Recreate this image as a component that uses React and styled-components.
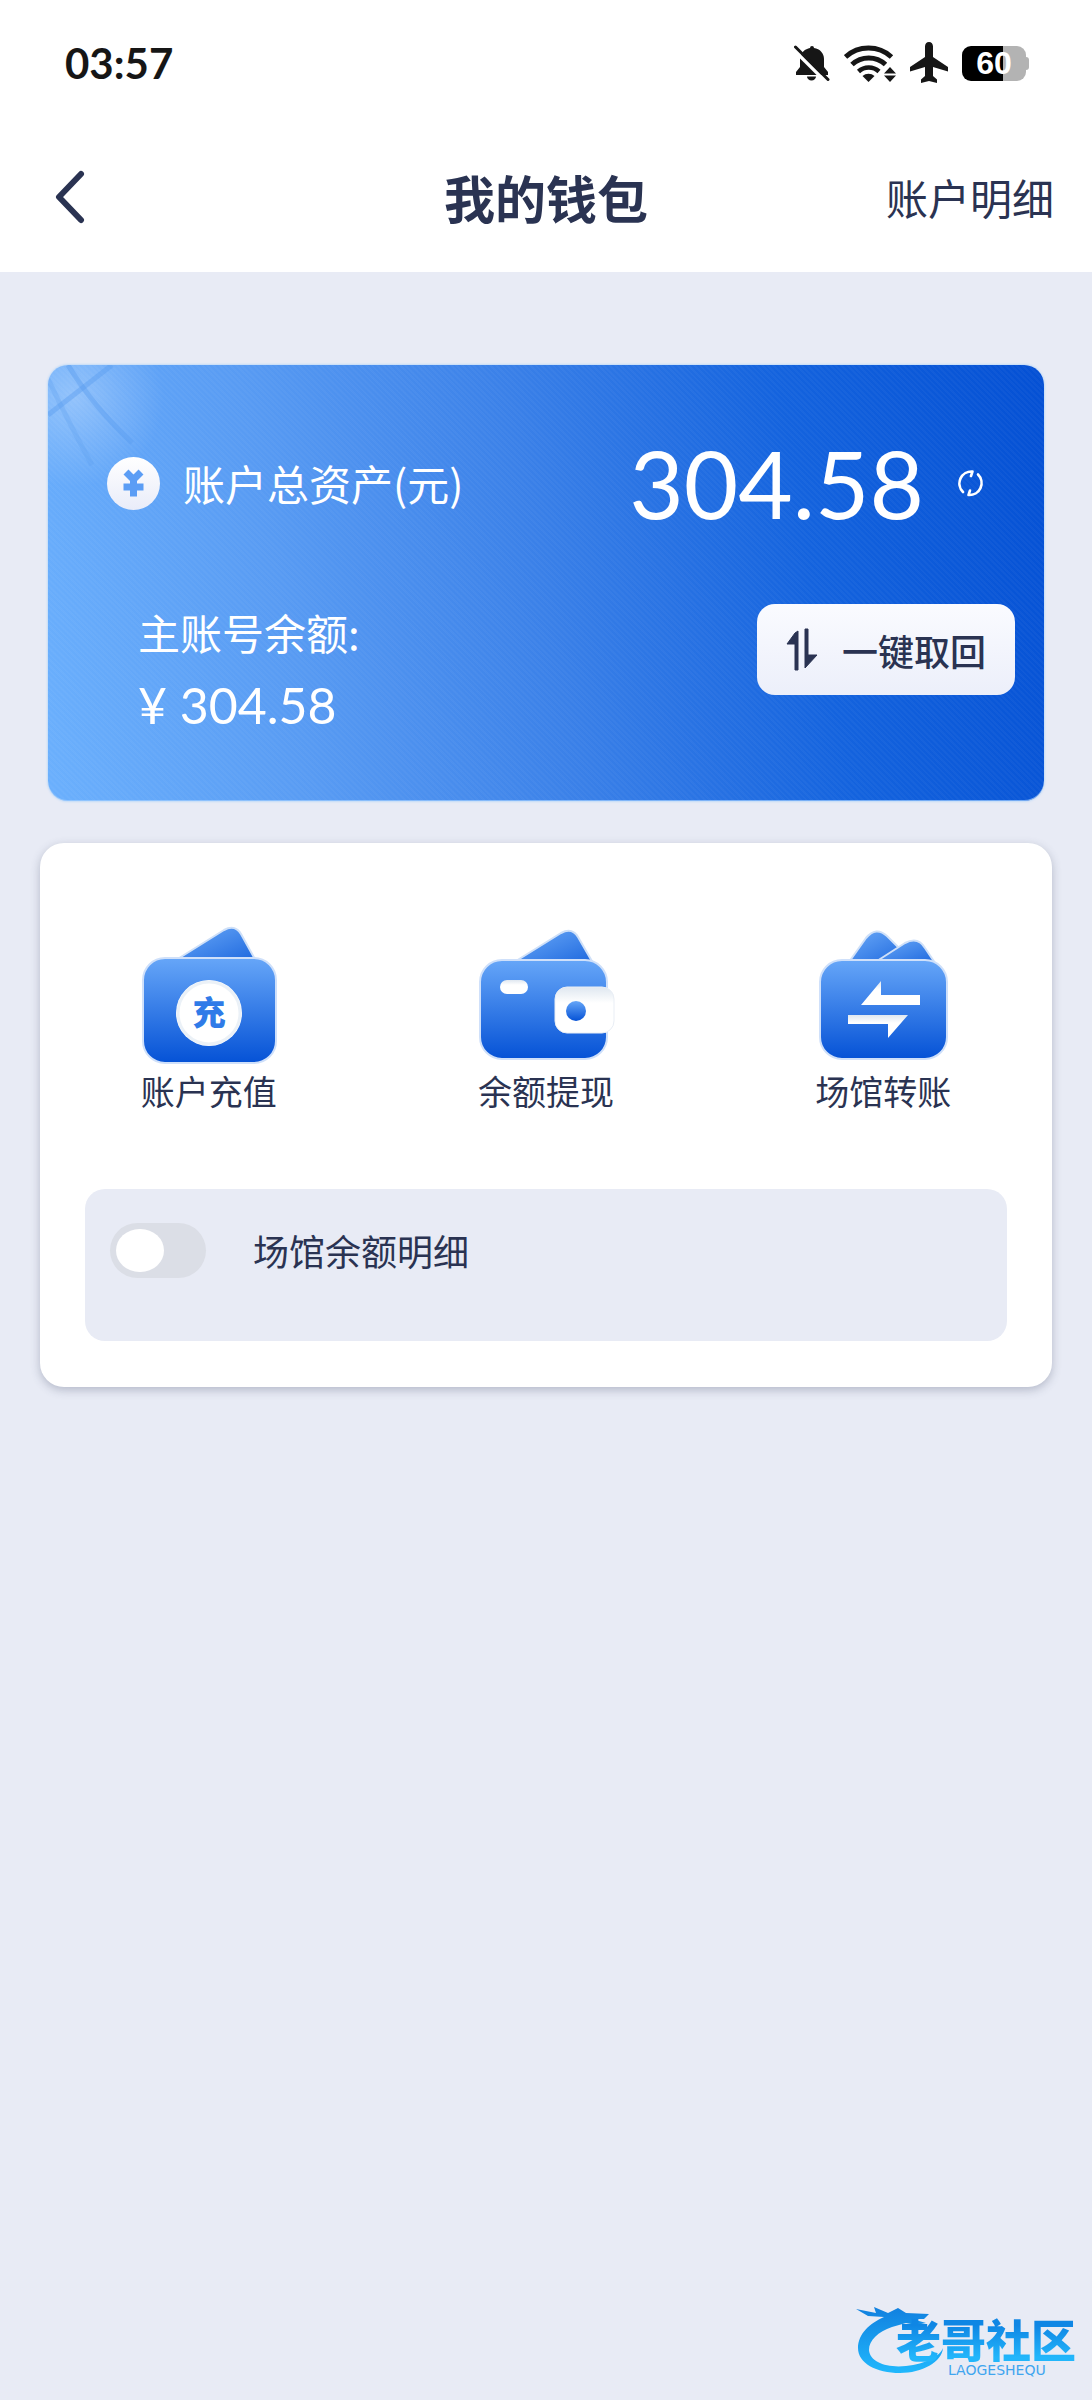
import React, { useState } from "react";
import styled, { createGlobalStyle } from "styled-components";

const GlobalStyle = createGlobalStyle`
  *, *::before, *::after { box-sizing: border-box; }
  body {
    margin: 0;
    background: #e8ebf5;
    color: #2a3352;
    font-family: "Noto Sans CJK SC", sans-serif;
  }
  button, input { font: inherit; color: inherit; }
`;

const Page = styled.div`
  min-height: 100vh;
  display: flex;
  flex-direction: column;
`;

const TopArea = styled.div`
  background: #fff;
`;

const StatusBar = styled.div`
  height: 126px;
  padding: 0 63px 0 65px;
  display: flex;
  align-items: center;
  justify-content: space-between;
`;

const Clock = styled.time`
  font-family: "Lato", sans-serif;
  font-size: 42px;
  font-weight: 700;
  line-height: 50px;
  color: #161616;
`;

const StatusIcons = styled.div`
  display: flex;
  align-items: center;
  gap: 14px;
  color: #161616;
  svg { display: block; }
`;

const Battery = styled.div`
  display: flex;
  align-items: center;
`;

const BatteryBody = styled.div`
  width: 64px;
  height: 35px;
  border-radius: 9px;
  display: flex;
  align-items: center;
  justify-content: center;
  background: linear-gradient(90deg, #000 64%, #b3b3b3 64%);
  color: #fff;
  font-family: "Liberation Sans", sans-serif;
  font-size: 32px;
  font-weight: 700;
  line-height: 35px;
`;

const BatteryTip = styled.div`
  width: 3px;
  height: 13px;
  border-radius: 0 3px 3px 0;
  background: #b3b3b3;
`;

const Header = styled.header`
  height: 146px;
  padding: 0 38px 4px;
  display: grid;
  grid-template-columns: 1fr auto 1fr;
  align-items: center;
`;

const BackButton = styled.button`
  justify-self: start;
  border: 0;
  background: none;
  padding: 6px 16px;
  cursor: pointer;
  svg { display: block; }
`;

const Title = styled.h1`
  margin: 0;
  font-size: 51px;
  font-weight: 700;
  line-height: 60px;
`;

const DetailLink = styled.a`
  justify-self: end;
  font-size: 42px;
  line-height: 60px;
  color: inherit;
  text-decoration: none;
`;

const Main = styled.main`
  flex: 1;
  display: flex;
  flex-direction: column;
  padding: 93px 40px 0;
`;

const BalanceCard = styled.section`
  position: relative;
  overflow: hidden;
  margin: 0 8px;
  padding: 66px 29px 66px 59px;
  border-radius: 20px;
  color: #fff;
  background:
    repeating-linear-gradient(45deg, rgba(255, 255, 255, 0.03) 0 2px, transparent 2px 4px),
    linear-gradient(80deg, #6bb0fd 0%, #589bf3 25%, #3a80e8 50%, #1463de 75%, #0450d4 100%);
  box-shadow: inset 0 -1px 0 rgba(160, 205, 255, 0.7), 0 0 2px 1px #c3dcf7;
`;

const Glow = styled.svg`
  position: absolute;
  top: 0;
  left: 0;
`;

const TotalRow = styled.div`
  position: relative;
  display: flex;
  align-items: center;
  height: 104px;
  padding-right: 31px;
`;

const TotalLabel = styled.h2`
  flex: 1;
  margin: 0 0 0 23px;
  font-size: 42px;
  font-weight: 400;
  line-height: 60px;
`;

const TotalAmount = styled.strong`
  font-family: "Lato", sans-serif;
  font-size: 94px;
  font-weight: 400;
  line-height: 104px;
`;

const RefreshButton = styled.button`
  margin-left: 33px;
  padding: 0;
  border: 0;
  background: none;
  cursor: pointer;
  svg { display: block; }
`;

const MainAccountRow = styled.div`
  display: flex;
  justify-content: space-between;
  align-items: flex-start;
  padding: 69px 0 0 31px;
`;

const MainAccount = styled.div`
  font-size: 42px;
  line-height: 56px;
`;

const AccountAmount = styled.div`
  margin-top: 15px;
  font-family: "Lato", sans-serif;
  font-size: 50px;
  line-height: 60px;
`;

const CollectButton = styled.button`
  height: 91px;
  padding: 0 29px;
  display: flex;
  align-items: center;
  gap: 24px;
  border: 0;
  border-radius: 18px;
  background: linear-gradient(180deg, #fafbff, #eceffa);
  color: #2a3352;
  font-size: 36px;
  font-weight: 500;
  line-height: 48px;
  cursor: pointer;
`;

const ActionsCard = styled.section`
  margin-top: 42px;
  padding: 78px 0 46px;
  border-radius: 24px;
  background: #fff;
  box-shadow: 0 3px 10px rgba(60, 70, 100, 0.3);
`;

const Actions = styled.nav`
  display: grid;
  grid-template-columns: repeat(3, 1fr);
`;

const Action = styled.button`
  display: flex;
  flex-direction: column;
  align-items: center;
  gap: 2px;
  padding: 0;
  border: 0;
  background: none;
  font-size: 34px;
  line-height: 48px;
  cursor: pointer;
  svg { display: block; }
`;

const VenuePanel = styled.div`
  min-height: 152px;
  margin: 74px 45px 0;
  padding: 33px 25px;
  border-radius: 20px;
  background: #e8ebf5;
`;

const SwitchRow = styled.label`
  display: flex;
  align-items: center;
  gap: 47px;
  height: 56px;
  font-size: 36px;
  line-height: 56px;
  cursor: pointer;
`;

const Switch = styled.input`
  appearance: none;
  flex: none;
  display: flex;
  align-items: center;
  width: 96px;
  height: 55px;
  margin: 0;
  padding: 0 6px;
  border-radius: 28px;
  background: #dbdee6;
  cursor: pointer;
  &::before {
    content: "";
    width: 48px;
    height: 43px;
    border-radius: 24px / 22px;
    background: #fff;
  }
  &:checked { background: #2f78e6; justify-content: flex-end; }
`;

const Footer = styled.footer`
  margin-top: auto;
  display: flex;
  justify-content: flex-end;
  padding: 0 16px 22px;
`;

const Brand = styled.div`
  position: relative;
  padding: 10px 0 0 40px;
`;

const BrandMark = styled.svg`
  position: absolute;
  left: 0;
  top: 0;
`;

const BrandName = styled.div`
  position: relative;
  font-size: 45px;
  font-weight: 900;
  line-height: 46px;
  color: transparent;
  background: linear-gradient(180deg, #0f86e4 20%, #22b6fb 90%);
  background-clip: text;
`;

const BrandLatin = styled.div`
  position: relative;
  padding-left: 52px;
  font-family: "DejaVu Sans", sans-serif;
  font-size: 14px;
  line-height: 16px;
  color: #3fa5ef;
`;

function MuteIcon() {
  return (
    <svg width="36" height="36" viewBox="0 0 36 36" fill="currentColor" aria-hidden="true">
      <defs>
        <mask id="bellCut">
          <rect width="36" height="36" fill="#fff" />
          <path d="M-2 3 33 38" stroke="#000" strokeWidth="3.4" />
        </mask>
      </defs>
      <path
        mask="url(#bellCut)"
        d="M16 3a2 2 0 0 1 4 0c6 1 10 5 10 11v8l4 5v3H2v-3l4-5v-8C7 7 11 4 16 3ZM13 31.500h9a4.500 4 0 0 1-9 0Z"
      />
      <path d="M1.500 2 34 34.500" stroke="currentColor" strokeWidth="3" strokeLinecap="round" />
    </svg>
  );
}

function WifiIcon() {
  return (
    <svg width="52" height="37" viewBox="0 0 52 37" fill="none" stroke="currentColor" strokeWidth="5" aria-hidden="true">
      <path d="M1.500 12a34 34 0 0 1 46 0" />
      <path d="M8 19.500a24.500 24.500 0 0 1 33.500 0" />
      <path d="M14.500 26.500a15 15 0 0 1 20.500 0" strokeWidth="4.500" />
      <path d="M18.500 31a9 9 0 0 1 12 0L24.500 37Z" fill="currentColor" stroke="none" />
      <path d="M46 22l6 6.500H40ZM46 37l6-6.500H40Z" fill="currentColor" stroke="none" />
    </svg>
  );
}

function PlaneIcon() {
  return (
    <svg width="38" height="42" viewBox="0 0 38 42" fill="currentColor" aria-hidden="true">
      <path d="M19 0c2.500 0 4 2 4 4.500V15l15 10v4.500L23 25v9l4 3.500V41l-8-2-8 2v-3.500l4-3.500v-9L0 29.500V25l15-10V4.500C15 2 16.500 0 19 0Z" />
    </svg>
  );
}

function CoinIcon() {
  return (
    <svg width="53" height="53" viewBox="0 0 53 53" aria-hidden="true">
      <defs>
        <linearGradient id="coinFill" x2="0" y2="1">
          <stop stopColor="#fff" />
          <stop offset="1" stopColor="#e9ecf9" />
        </linearGradient>
      </defs>
      <circle cx="26.500" cy="26.500" r="26.500" fill="url(#coinFill)" />
      <path d="M19 15l7.500 7.500L34 15M26.500 22v17.500M16.500 30h20" stroke="#5b9df5" strokeWidth="7" fill="none" />
    </svg>
  );
}

function WalletDefs({ id }) {
  return (
    <defs>
      <linearGradient id={id + "Body"} x2="0" y2="1">
        <stop stopColor="#66a6f8" />
        <stop offset="1" stopColor="#0552d6" />
      </linearGradient>
      <linearGradient id={id + "Flap"} x1="0" x2="1" y2="1">
        <stop stopColor="#6aa9f8" />
        <stop offset="1" stopColor="#1e68de" />
      </linearGradient>
      <linearGradient id={id + "Pale"} x2="0" y2="1">
        <stop stopColor="#dfe7f0" />
        <stop offset="0.350" stopColor="#fff" />
        <stop offset="1" stopColor="#fff" />
      </linearGradient>
    </defs>
  );
}

function DepositIcon() {
  return (
    <svg width="140" height="144" viewBox="1 0 140 144" aria-hidden="true">
      <WalletDefs id="deposit" />
      <path d="M38 39 86 9q11-6 17 4l15 27Z" fill="url(#depositFlap)" stroke="#cfe0f8" strokeWidth="2" />
      <rect x="5" y="37" width="133" height="105" rx="22" fill="url(#depositBody)" stroke="#cfe0fa" strokeWidth="2" />
      <circle cx="71" cy="92" r="33" fill="#fff" />
      <circle cx="71" cy="92" r="31" fill="none" stroke="#e3ebf3" strokeWidth="3" opacity="0.700" />
      <text x="71" y="104" textAnchor="middle" fontFamily="Noto Sans CJK SC, sans-serif" fontSize="33" fontWeight="900" fill="#2f7be8">充</text>
    </svg>
  );
}

function WithdrawIcon() {
  return (
    <svg width="140" height="144" viewBox="1 0 140 144" aria-hidden="true">
      <WalletDefs id="withdraw" />
      <path d="M41 40 86 12q11-6 17 4l15 26Z" fill="url(#withdrawFlap)" stroke="#cfe0f8" strokeWidth="2" />
      <rect x="5" y="39" width="127" height="99" rx="22" fill="url(#withdrawBody)" stroke="#cfe0fa" strokeWidth="2" />
      <rect x="25" y="59" width="28" height="14" rx="7" fill="url(#withdrawPale)" />
      <rect x="80" y="66" width="59" height="46" rx="12" fill="url(#withdrawPale)" stroke="#e9eef5" />
      <circle cx="101" cy="90" r="10" fill="url(#withdrawBody)" />
    </svg>
  );
}

function TransferIcon() {
  return (
    <svg width="140" height="144" viewBox="0 0 140 144" aria-hidden="true">
      <WalletDefs id="transfer" />
      <path d="M36 41 53 17q10-12 21-2l22 22Z" fill="url(#transferFlap)" stroke="#cfe0f8" strokeWidth="2" />
      <path d="M64 40 92 22q13-7 20 5l10 15Z" fill="url(#transferFlap)" stroke="#cfe0f8" strokeWidth="2" />
      <rect x="7" y="39" width="127" height="99" rx="22" fill="url(#transferBody)" stroke="#cfe0fa" strokeWidth="2" />
      <path d="M48 84 68 60v14h39v10Z" fill="url(#transferPale)" />
      <path d="M35 94h60L75 117v-14H35Z" fill="url(#transferPale)" />
    </svg>
  );
}

const actions = [
  { label: "账户充值", Icon: DepositIcon },
  { label: "余额提现", Icon: WithdrawIcon },
  { label: "场馆转账", Icon: TransferIcon },
];

export default function App() {
  const [showVenues, setShowVenues] = useState(false);
  return (
    <Page>
      <GlobalStyle />
      <TopArea>
        <StatusBar>
          <Clock>03:57</Clock>
          <StatusIcons>
            <MuteIcon />
            <WifiIcon />
            <PlaneIcon />
            <Battery>
              <BatteryBody>60</BatteryBody>
              <BatteryTip />
            </Battery>
          </StatusIcons>
        </StatusBar>
        <Header>
          <BackButton type="button" aria-label="返回">
            <svg width="32" height="54" viewBox="0 0 32 54" fill="none" stroke="currentColor" strokeWidth="6" strokeLinecap="round" strokeLinejoin="round" aria-hidden="true">
              <path d="M27 4 5 27l22 23" />
            </svg>
          </BackButton>
          <Title>我的钱包</Title>
          <DetailLink href="#details">账户明细</DetailLink>
        </Header>
      </TopArea>

      <Main>
        <BalanceCard>
          <Glow width="200" height="160" viewBox="0 0 200 160" aria-hidden="true">
            <defs>
              <radialGradient id="cornerGlow" gradientUnits="userSpaceOnUse" cx="26" cy="32" r="90">
                <stop stopColor="#fff" stopOpacity="0.300" />
                <stop offset="0.500" stopColor="#fff" stopOpacity="0.140" />
                <stop offset="1" stopColor="#fff" stopOpacity="0" />
              </radialGradient>
            </defs>
            <rect width="200" height="160" fill="url(#cornerGlow)" />
            <g stroke="#5c9ef0" strokeWidth="5" strokeOpacity="0.450" fill="none">
              <path d="M20 0 Q44 40 84 78" />
              <path d="M0 14 Q22 60 44 100" strokeOpacity="0.300" />
              <path d="M0 50 64 0" />
            </g>
          </Glow>
          <TotalRow>
            <CoinIcon />
            <TotalLabel>账户总资产(元)</TotalLabel>
            <TotalAmount>304.58</TotalAmount>
            <RefreshButton type="button" aria-label="刷新">
              <svg width="27" height="27" viewBox="0 0 27 27" fill="none" stroke="#fff" strokeWidth="2.600" strokeLinecap="round" strokeLinejoin="round" aria-hidden="true">
                <path d="M6 22A12 12 0 0 1 15.500 1.500L14 6" />
                <path d="M21 4.500A12 12 0 0 1 11.500 25L13 20.500" />
              </svg>
            </RefreshButton>
          </TotalRow>
          <MainAccountRow>
            <MainAccount>
              主账号余额:
              <AccountAmount>¥ 304.58</AccountAmount>
            </MainAccount>
            <CollectButton type="button">
              <svg width="32" height="44" viewBox="0 0 32 44" fill="currentColor" stroke="currentColor" strokeLinejoin="round" aria-hidden="true">
                <path d="M9 5 12 3v39H9V16H1ZM19 1h3v26h9L19 40Z" />
              </svg>
              一键取回
            </CollectButton>
          </MainAccountRow>
        </BalanceCard>

        <ActionsCard>
          <Actions>
            {actions.map(({ label, Icon }) => (
              <Action key={label} type="button">
                <Icon />
                {label}
              </Action>
            ))}
          </Actions>
          <VenuePanel>
            <SwitchRow>
              <Switch
                type="checkbox"
                role="switch"
                checked={showVenues}
                onChange={(event) => setShowVenues(event.target.checked)}
              />
              场馆余额明细
            </SwitchRow>
          </VenuePanel>
        </ActionsCard>
      </Main>

      <Footer>
        <Brand>
          <BrandMark width="100" height="72" viewBox="0 0 100 72" aria-hidden="true">
            <defs>
              <linearGradient id="dragon" x2="0" y2="1">
                <stop stopColor="#1180df" />
                <stop offset="1" stopColor="#20b8fd" />
              </linearGradient>
            </defs>
            <path
              fill="url(#dragon)"
              d="M0 3 20 7 18 1 32 7 42 2 50 7 73 8 68 13 56 13 70 17 60 19 50 17 36 21C22 26 13 34 13 44 14 56 30 62 50 60 70 58 84 50 87 42 86 56 66 67 44 67 20 67 2 57 2 42 2 28 14 17 28 11L12 10Z"
            />
          </BrandMark>
          <BrandName>老哥社区</BrandName>
          <BrandLatin>LAOGESHEQU</BrandLatin>
        </Brand>
      </Footer>
    </Page>
  );
}
